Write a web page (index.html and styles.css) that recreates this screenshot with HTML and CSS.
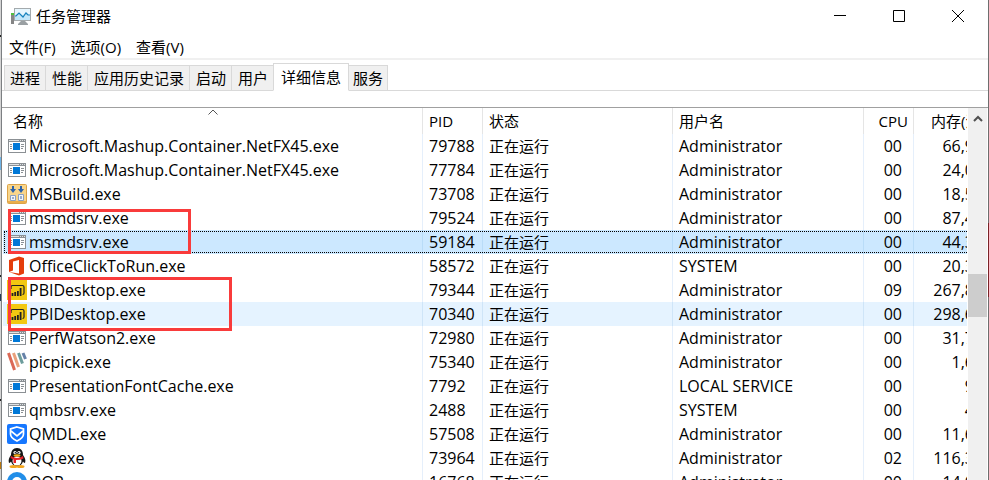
FILE: index.html
```html
<!DOCTYPE html>
<html lang="zh-CN">
<head>
<meta charset="utf-8">
<title>任务管理器</title>
<link rel="stylesheet" href="styles.css">
</head>
<body>
<svg class="sprites" aria-hidden="true">
  <symbol id="exe" viewBox="0 0 18 14"><path fill="#8b9094" d="M0 0h18v14H0z"/><path fill="#fff" d="M1 3h16v10H1z"/><path fill="#dfe2e4" d="M1 1h16v1H1z"/><path fill="#8b9094" d="M11 1h1v1h-1zM13 1h1v1h-1zM15 1h1v1h-1zM2 5h2v1H2zM2 7h2v1H2zM2 9h2v1H2zM13 5h3v1h-3zM13 7h3v1h-3zM13 9h2v1h-2z"/><path fill="#0078d7" d="M5 4h7v7H5z"/></symbol>
  <symbol id="msbuild" viewBox="0 0 20 20"><rect x=".5" y=".5" width="19" height="19" rx="1" fill="#f8d58b" stroke="#dca348"/><path fill="#eaae4c" d="M1 17h18v2H1z"/><path fill="#2c62aa" d="M5 2h2v3h2L6 9 3 5h2zM13 2h2v3h2l-3 4-3-4h2z"/><path fill="#f2f5fa" stroke="#8ba1c2" d="M3.500 11.500h5v5h-5zM11.500 10.500h5v6h-5z"/><path fill="#9daecb" d="M5 13h2v2H5zM13 12h2v3h-2z"/></symbol>
  <symbol id="office" viewBox="0 0 20 20"><path fill="#e43d0c" d="M2 4l10-3.500 5 1.500v15.500L12 19.500 2 16l10 1.500V4L6 5.500v9L2 16z"/></symbol>
  <symbol id="pbi" viewBox="0 0 20 20"><path fill="#f2c811" d="M0 0h20v20H0z"/><path fill="none" stroke="#222" stroke-width="1.200" d="M4 9V7q0-1.500 1.500-1.500h10q1.500 0 1.500 1.500v6q0 1.500-1.500 1.500"/><path stroke="#222" stroke-width="1.800" d="M5.500 16v-3M8.200 16v-4M10.900 16v-5M13.600 16V8"/></symbol>
  <symbol id="picpick" viewBox="0 0 20 20"><g fill="none" stroke-width="3"><path stroke="#db6956" d="M1.500 1l6 17"/><path stroke="#e9a17c" d="M6.500 1l5 14"/><path stroke="#6d9d9c" d="M11.500 1l4 10.500"/><path stroke="#6581a8" d="M16 1l2.500 6"/></g></symbol>
  <symbol id="qmdl" viewBox="0 0 20 20"><rect width="20" height="20" rx="2" fill="#1677ff"/><path fill="none" stroke="#fff" stroke-width="1.700" d="M10 3l6.500 2v5q0 4-6.500 7-6.500-3-6.500-7V5z"/><path fill="none" stroke="#fff" stroke-width="1.700" d="M4 7l6 5 6-5"/></symbol>
  <symbol id="qq" viewBox="0 0 20 20"><path fill="#151515" d="M10 0c4 0 6 3 6 7 2 3 3 5 2 8-1 0-1.500-1-2-1.500-1 3-3 4.500-6 4.500s-5-1.500-6-4.500C3.500 14 3 15 2 15c-1-3 0-5 2-8 0-4 2-7 6-7z"/><ellipse cx="10" cy="13" rx="4.500" ry="4.500" fill="#fff"/><circle cx="8" cy="4.500" r="1.600" fill="#fff"/><circle cx="12" cy="4.500" r="1.600" fill="#fff"/><circle cx="8.300" cy="4.700" r=".7"/><circle cx="11.700" cy="4.700" r=".7"/><ellipse cx="10" cy="7.500" rx="3.500" ry="1.200" fill="#f7ad14"/><path fill="#e8222a" d="M4 8q6 4 12 0l.5 2.500q-3 1.500-7.500 1.500v3H6.500v-3.500L3.500 10z"/><ellipse cx="6.500" cy="18.500" rx="4" ry="1.500" fill="#f3a51c"/><ellipse cx="13.500" cy="18.500" rx="4" ry="1.500" fill="#f3a51c"/></symbol>
  <symbol id="browser" viewBox="0 0 20 20"><circle cx="10" cy="10" r="10" fill="#218ee8"/><circle cx="10" cy="10" r="5" fill="#fff"/></symbol>
</svg>
<div class="edge edge-left"></div>
<main class="window">
  <header class="titlebar">
    <svg class="app-icon" viewBox="0 0 20 17"><path fill="#858585" d="M0 5h3v11H0z"/><path fill="#4fc03c" d="M0 5h3v2H0z"/><path fill="#a4aaad" d="M3 0h17v13H3z"/><path fill="#e6f6fe" d="M4 1h15v11H4z"/><path fill="#c3e7fa" d="M4 8l3-3 4 3 4-4 4 4v4H4z"/><path fill="none" stroke="#1682bd" stroke-width="1.200" d="M4 8h1l3-3 4 4 3-4 2 2h2"/><path fill="#9aa0a3" d="M10 13h4l3 3v1H7v-1z"/></svg>
    <h1 class="title">任务管理器</h1>
    <div class="controls">
      <button aria-label="最小化"><svg viewBox="0 0 12 12"><path d="M0 5.500h12"/></svg></button>
      <button aria-label="最大化"><svg viewBox="0 0 12 12"><path d="M.5.5h11v11H.5z"/></svg></button>
      <button aria-label="关闭"><svg viewBox="0 0 12 12"><path d="M0 0l12 12M12 0L0 12"/></svg></button>
    </div>
  </header>
  <nav class="menubar"><button>文件(F)</button><button>选项(O)</button><button>查看(V)</button></nav>
  <div class="tabs" role="tablist"><button role="tab">进程</button><button role="tab">性能</button><button role="tab">应用历史记录</button><button role="tab">启动</button><button role="tab">用户</button><button role="tab" class="active" aria-selected="true">详细信息</button><button role="tab">服务</button></div>
  <section class="details">
    <div class="list">
      <table>
        <colgroup><col><col class="c-pid"><col class="c-status"><col class="c-user"><col class="c-cpu"><col class="c-mem"></colgroup>
        <thead><tr><th>名称<svg class="sort" viewBox="0 0 10 6"><path d="M.5 5.500L5 1l4.500 4.500"/></svg></th><th>PID</th><th>状态</th><th>用户名</th><th class="num">CPU</th><th class="mem">内存(活</th></tr></thead>
        <tbody>
          <tr><td><span class="proc"><svg class="exe"><use href="#exe"/></svg>Microsoft.Mashup.Container.NetFX45.exe</span></td><td>79788</td><td class="zh">正在运行</td><td>Administrator</td><td class="num">00</td><td class="mem">66,9</td></tr>
          <tr><td><span class="proc"><svg class="exe"><use href="#exe"/></svg>Microsoft.Mashup.Container.NetFX45.exe</span></td><td>77784</td><td class="zh">正在运行</td><td>Administrator</td><td class="num">00</td><td class="mem">24,0</td></tr>
          <tr><td><span class="proc"><svg><use href="#msbuild"/></svg>MSBuild.exe</span></td><td>73708</td><td class="zh">正在运行</td><td>Administrator</td><td class="num">00</td><td class="mem">18,5</td></tr>
          <tr><td><span class="proc"><svg class="exe"><use href="#exe"/></svg>msmdsrv.exe</span></td><td>79524</td><td class="zh">正在运行</td><td>Administrator</td><td class="num">00</td><td class="mem">87,4</td></tr>
          <tr class="selected"><td><span class="proc"><svg class="exe"><use href="#exe"/></svg>msmdsrv.exe</span></td><td>59184</td><td class="zh">正在运行</td><td>Administrator</td><td class="num">00</td><td class="mem">44,3</td></tr>
          <tr><td><span class="proc"><svg><use href="#office"/></svg>OfficeClickToRun.exe</span></td><td>58572</td><td class="zh">正在运行</td><td>SYSTEM</td><td class="num">00</td><td class="mem">20,3</td></tr>
          <tr><td><span class="proc"><svg><use href="#pbi"/></svg>PBIDesktop.exe</span></td><td>79344</td><td class="zh">正在运行</td><td>Administrator</td><td class="num">09</td><td class="mem">267,8</td></tr>
          <tr class="hovered"><td><span class="proc"><svg><use href="#pbi"/></svg>PBIDesktop.exe</span></td><td>70340</td><td class="zh">正在运行</td><td>Administrator</td><td class="num">00</td><td class="mem">298,6</td></tr>
          <tr><td><span class="proc"><svg class="exe"><use href="#exe"/></svg>PerfWatson2.exe</span></td><td>72980</td><td class="zh">正在运行</td><td>Administrator</td><td class="num">00</td><td class="mem">31,7</td></tr>
          <tr><td><span class="proc"><svg><use href="#picpick"/></svg>picpick.exe</span></td><td>75340</td><td class="zh">正在运行</td><td>Administrator</td><td class="num">00</td><td class="mem">1,6</td></tr>
          <tr><td><span class="proc"><svg class="exe"><use href="#exe"/></svg>PresentationFontCache.exe</span></td><td>7792</td><td class="zh">正在运行</td><td>LOCAL SERVICE</td><td class="num">00</td><td class="mem">9</td></tr>
          <tr><td><span class="proc"><svg class="exe"><use href="#exe"/></svg>qmbsrv.exe</span></td><td>2488</td><td class="zh">正在运行</td><td>SYSTEM</td><td class="num">00</td><td class="mem">4</td></tr>
          <tr><td><span class="proc"><svg><use href="#qmdl"/></svg>QMDL.exe</span></td><td>57508</td><td class="zh">正在运行</td><td>Administrator</td><td class="num">00</td><td class="mem">11,6</td></tr>
          <tr><td><span class="proc"><svg><use href="#qq"/></svg>QQ.exe</span></td><td>73964</td><td class="zh">正在运行</td><td>Administrator</td><td class="num">02</td><td class="mem">116,3</td></tr>
          <tr><td><span class="proc"><svg><use href="#browser"/></svg>QQP</span></td><td>16768</td><td class="zh">正在运行</td><td>Administrator</td><td class="num">00</td><td class="mem">14,0</td></tr>
        </tbody>
      </table>
      <div class="mark mark-msmdsrv"></div>
      <div class="mark mark-pbi"></div>
    </div>
    <div class="scrollbar"><svg viewBox="0 0 10 7"><path d="M1 6l4-4 4 4"/></svg><div class="thumb"></div></div>
  </section>
</main>
<div class="edge edge-right"></div>
</body>
</html>
```
FILE: styles.css
```css
* { box-sizing: border-box; }
html, body { height: 100%; }
body { margin: 0; display: flex; overflow: hidden; background: #fff; color: #000; font: 15px/24px "Open Sans", "Noto Sans CJK SC", sans-serif; }
button { font: inherit; color: inherit; border: 0; background: none; padding: 0; }
.sprites { position: absolute; width: 0; height: 0; }

/* slivers of the desktop on either side of the window */
.edge { flex: none; width: 1px; }
.edge-left { background: linear-gradient(#d4d4d4 35px, #222 35px 37px, #d4d4d4 37px 157px, #6fb4e6 157px 170px, #d4d4d4 170px 275px, #222 275px 277px, #d4d4d4 277px 294px, #223a5c 294px 301px, #d4d4d4 301px 399px, #222 399px 401px, #d4d4d4 401px 462px, #b9770e 462px 469px, #d4d4d4 469px); }
.edge-right { background: linear-gradient(#6e6e6e 223px, #7a2328 223px 297px, #6e6e6e 297px); }

.window { flex: 1; min-width: 0; display: flex; flex-direction: column; border-left: 1px solid #7c7f82; overflow: hidden; }
.titlebar { display: flex; align-items: center; flex: none; height: 32px; padding-left: 9px; }
.app-icon { width: 20px; height: 17px; }
.title { margin: 0 0 0 5px; font-size: 15px; font-weight: 400; }
.controls { margin: 0 1px 0 auto; display: flex; }
.controls button { width: 59px; height: 32px; display: flex; align-items: center; justify-content: center; }
.controls svg { width: 12px; height: 12px; fill: none; stroke: #000; stroke-width: 1; }
.menubar { display: flex; flex: none; gap: 15px; height: 28px; padding: 4px 7px 0; border-bottom: 2px solid #f0f0f0; line-height: 22px; }
.tabs { display: flex; flex: none; align-items: flex-end; height: 31px; padding-left: 2px; border-bottom: 1px solid #d9d9d9; }
.tabs button { height: 26px; padding: 0 5px 0 6px; border: 1px solid #d9d9d9; border-left-width: 0; background: #f0f0f0; margin-bottom: -1px; line-height: 22px; }
.tabs button:first-child { border-left-width: 1px; padding: 0 5px; }
.tabs .active { height: 28px; margin-left: -1px; padding: 0 7px; border-left-width: 1px; background: #fff; border-bottom-color: #fff; }
.tabs button:last-child { padding: 0 4px; }
.details { display: flex; flex: 1; min-height: 0; margin-top: 16px; border-top: 1px solid #a0a0a0; }
.list { position: relative; flex: 1; min-width: 0; overflow: hidden; margin-left: 1px; }

/* the last column runs on past the visible area */
table { width: calc(100% + 7px); table-layout: fixed; border-collapse: separate; border-spacing: 0; }
.c-pid { width: 60px; }
.c-status { width: 190px; }
.c-user { width: 191px; }
.c-cpu { width: 50px; }
.c-mem { width: 60px; }
th, td { height: 24px; padding: 0 0 0 6px; text-align: left; white-space: nowrap; font-weight: 400; border-right: 1px solid #e5effb; }
td { font-size: 16px; }
td.zh { font-size: 15px; }
th { position: relative; height: 26px; border-right-color: #e5e5e5; }
th:first-child { padding-left: 10px; }
td:first-child { padding-left: 4px; }
th:last-child, td:last-child { border-right: 0; }
.num { text-align: right; padding-right: 11px; }
th.num { padding-right: 5px; }
td.mem { text-align: right; }
th.mem { padding-left: 17px; }
.sort { position: absolute; left: 50%; top: 1px; width: 10px; height: 6px; margin-left: -5px; fill: none; stroke: #555; }
.proc { display: flex; align-items: center; gap: 2px; height: 24px; }
.proc svg { width: 20px; height: 20px; flex: none; }
.proc .exe { width: 18px; height: 14px; margin: 0 1px; shape-rendering: crispEdges; }
.selected { outline: 1px dotted #000; outline-offset: -2px; }
.selected td { background: #cce8ff; border-right-color: #b9dcf8; }
.hovered td { background: #e5f3ff; border-right-color: #cfe5f8; }
.scrollbar { flex: none; width: 19px; margin: 0 1px; background: #f0f0f0; display: flex; flex-direction: column; align-items: center; }
.scrollbar svg { width: 10px; height: 7px; margin-top: 7px; fill: none; stroke: #505050; stroke-width: 2; }
.thumb { width: 19px; height: 43px; margin-top: 152px; background: #cdcdcd; }
.mark { position: absolute; border: 3px solid #f93b3b; }
.mark-msmdsrv { left: 5px; top: 101px; width: 183px; height: 45px; }
.mark-pbi { left: 5px; top: 169px; width: 224px; height: 54px; }
```
